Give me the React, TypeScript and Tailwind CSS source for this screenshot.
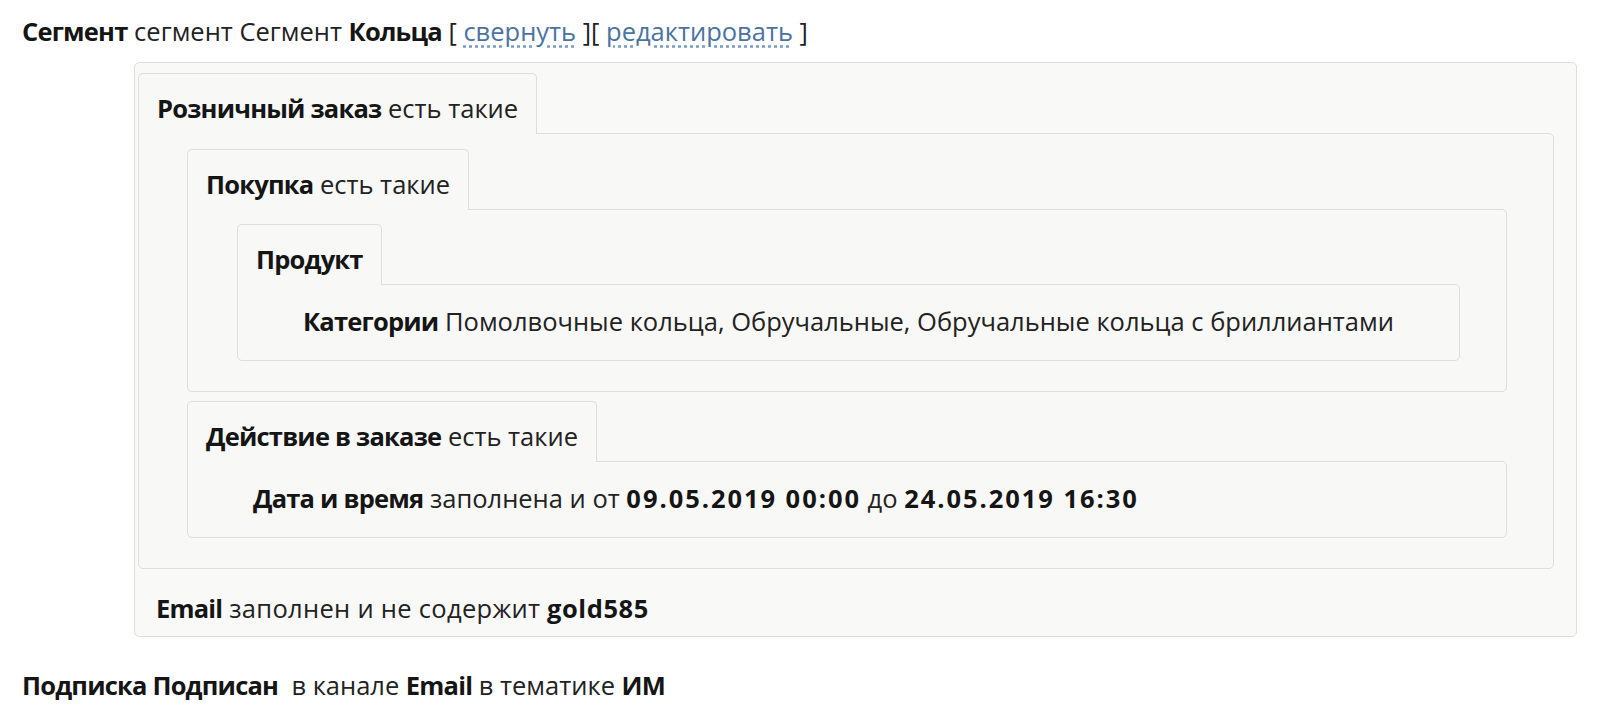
import type { ReactNode } from 'react';

function Tab({ children }: { children: ReactNode }) {
	return (
		<div className="relative z-10 -mb-px inline-block h-[61px] rounded-t-[5px] border border-b-0 border-[#dededc] bg-[#f8f8f7] px-[18px] pt-[19px] leading-[30px]">
			{children}
		</div>
	);
}

function Section({ tab, children, className = '' }: { tab: ReactNode; children: ReactNode; className?: string }) {
	return (
		<div className={`flex flex-col items-start ${className}`}>
			<Tab>{tab}</Tab>
			<div className="w-full rounded-[5px] rounded-tl-none border border-[#dededc] bg-[#f8f8f7]">{children}</div>
		</div>
	);
}

function Line({ children }: { children: ReactNode }) {
	return <div className="pb-[24px] pl-[65px] pt-[21px] leading-[30px]">{children}</div>;
}

// bold digits in the original font are much wider
function Num({ children }: { children: ReactNode }) {
	return <b className="!tracking-[1.95px]">{children}</b>;
}

export default function App() {
	return (
		<div
			className="min-h-screen bg-white px-[22px] pt-[16px] text-[25.5px] text-[#222] [&_b]:tracking-[-0.8px] [&_b]:text-[#151515]"
			style={{ fontFamily: '"Open Sans", Roboto, sans-serif' }}
		>
			<div className="leading-[30px]">
				<b>Сегмент</b> сегмент Сегмент <b>Кольца</b> [{' '}
				<a className="cursor-pointer text-[#4a73a3] underline decoration-dotted decoration-[#7a9cc4] underline-offset-4">свернуть</a> ][{' '}
				<a className="cursor-pointer text-[#4a73a3] underline decoration-dotted decoration-[#7a9cc4] underline-offset-4">редактировать</a> ]
			</div>

			<div className="ml-[112px] mt-[16px] rounded-[5px] border border-[#dededc] bg-[#f9f9f8] pb-[13px] pl-[3px] pr-[22px] pt-[10px]">
				<Section
					tab={
						<>
							<b>Розничный заказ</b> есть такие
						</>
					}
				>
					<div className="flex flex-col gap-[9px] pb-[30px] pl-[48px] pr-[46px] pt-[15px]">
						<Section
							tab={
								<>
									<b>Покупка</b> есть такие
								</>
							}
						>
							<div className="pb-[30px] pl-[49px] pr-[46px] pt-[14px]">
								<Section tab={<b>Продукт</b>}>
									<Line>
										<b>Категории</b> Помолвочные кольца, Обручальные, Обручальные кольца с бриллиантами
									</Line>
								</Section>
							</div>
						</Section>
						<Section
							tab={
								<>
									<b>Действие в заказе</b> есть такие
								</>
							}
						>
							<Line>
								<b>Дата и время</b> заполнена и от <Num>09.05.2019 00:00</Num> до <Num>24.05.2019 16:30</Num>
							</Line>
						</Section>
					</div>
				</Section>
				<div className="ml-[18px] mt-[24px] leading-[30px]">
					<span className="tracking-[0.3px]">
						<b>Email</b> заполнен и не содержит
					</span>{' '}
					<b className="!tracking-[0.6px]">gold585</b>
				</div>
			</div>

			<div className="mt-[33px] leading-[30px]">
				<b>Подписка Подписан</b>&nbsp; в канале <b>Email</b> в тематике <b>ИМ</b>
			</div>
		</div>
	);
}
